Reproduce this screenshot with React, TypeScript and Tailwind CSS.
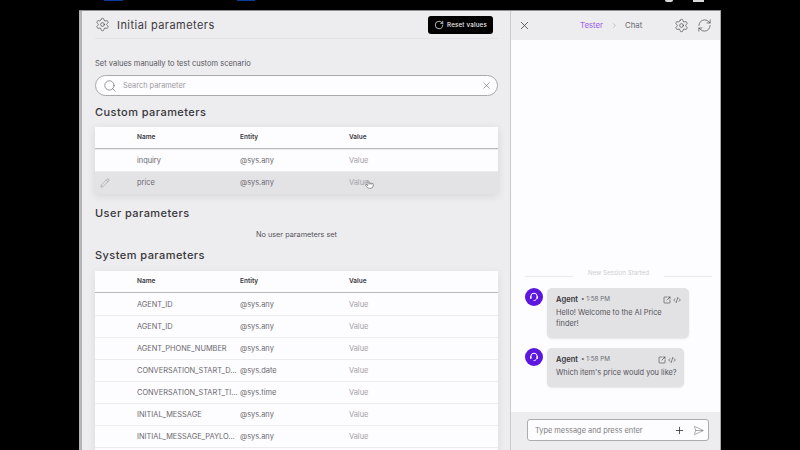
import React from 'react';
import { Settings, RotateCw, RefreshCw, X, Search, Pencil, ChevronRight, Plus, SendHorizontal, SquareArrowOutUpRight, CodeXml, Pointer } from 'lucide-react';

const customRows = [
    { name: 'inquiry', entity: '@sys.any' },
    { name: 'price', entity: '@sys.any', hover: true },
];

const systemRows = [
    { name: 'AGENT_ID', entity: '@sys.any' },
    { name: 'AGENT_ID', entity: '@sys.any' },
    { name: 'AGENT_PHONE_NUMBER', entity: '@sys.any' },
    { name: 'CONVERSATION_START_DATE', entity: '@sys.date' },
    { name: 'CONVERSATION_START_TIME', entity: '@sys.time' },
    { name: 'INITIAL_MESSAGE', entity: '@sys.any' },
    { name: 'INITIAL_MESSAGE_PAYLOAD', entity: '@sys.any' },
    { name: 'LANGUAGE', entity: '@sys.any' },
];

const TableHeader = () => (
    <div className="box-content flex h-[20px] items-center border-b border-[#b9b8bc] pt-[1px] text-[6.5px] font-semibold text-[#3a393d]">
        <span className="w-[42px]" />
        <span className="w-[103px]">Name</span>
        <span className="w-[109px]">Entity</span>
        <span>Value</span>
    </div>
);

const Row = ({ name, entity, hover }: { name: string; entity: string; hover?: boolean }) => (
    <div className={`relative flex h-[22px] items-center border-b text-[7.4px] ${hover ? 'bg-[#e3e2e5] border-[#e3e2e5]' : 'border-[#ecebee]'}`}>
        <span className="flex w-[42px] pl-[5px]">
            {hover && <Pencil size={10} strokeWidth={1} className="text-[#77767b]" />}
        </span>
        <span className="w-[103px] truncate pr-[2px] text-[#6b6a70]">{name}</span>
        <span className="w-[109px] text-[#6b6a70]">{entity}</span>
        <span className="text-[#a3a2a7]">Value</span>
        {hover && (
            <Pointer size={9} strokeWidth={1.3} fill="#ffffff" className="absolute left-[270px] top-[8px] text-[#4b4a4f]" />
        )}
    </div>
);

const AgentAvatar = () => (
    <div className="flex h-[18px] w-[18px] shrink-0 items-center justify-center rounded-full bg-[#5b16e0]">
        <svg width="10" height="10" viewBox="0 0 10 10" fill="none" stroke="#ffffff" strokeWidth="1" strokeLinecap="round">
            <path d="M1.8 5.4V4.4a3.2 3.2 0 0 1 6.4 0v1" />
            <path d="M1.8 4.8v1.4M8.2 4.8v1.4" strokeWidth="1.5" />
            <path d="M7.6 6.8 C7 8.2 6 8.6 5 8.6" />
        </svg>
    </div>
);

const Bubble = ({ text, className }: { text: string; className: string }) => (
    <div className="flex gap-[4px]">
        <AgentAvatar />
        <div className={`rounded-[5px] bg-[#e2e1e4] pl-[9px] pr-[5px] pt-[6px] shadow-[0_1px_2px_rgba(0,0,0,0.1)] ${className}`}>
            <div className="flex h-[11px] items-center">
                <span className="text-[7.6px] font-semibold text-[#38373b]">Agent</span>
                <span className="ml-[3px] text-[6.3px] text-[#6b6a70]">• 1:58 PM</span>
                <span className="ml-auto mr-[3px] flex items-center gap-[2px] text-[#2f2e32]">
                    <SquareArrowOutUpRight size={8} strokeWidth={1.6} />
                    <CodeXml size={8} strokeWidth={1.6} />
                </span>
            </div>
            <p className="mt-[2px] text-[7.4px] leading-[11px] text-[#55545a]">{text}</p>
        </div>
    </div>
);

export default function App() {
    return (
        <div className="flex h-[450px] w-[800px] flex-col overflow-hidden bg-black font-['Inter',sans-serif]">
            <div className="relative flex h-[10px] shrink-0">
                <span className="ml-[104px] h-[1px] w-[19px] bg-[#0a3a9c]" />
                <span className="ml-[114px] h-[1px] w-[18px] bg-[#0a3a9c]" />
                <span className="ml-[410px] h-[2px] w-[8px] rounded-b-full bg-[#d9d9d9]" />
                <span className="ml-[20px] h-[2px] w-[11px] bg-[#d9d9d9]" />
            </div>
            <div className="ml-[79px] flex h-[440px] w-[642px] overflow-hidden border-t border-[#8f8e92]">
                <div className="flex w-[432px] shrink-0 border-r border-[#c9c8cc] bg-[#edecef]">
                    <div className="w-[3px] shrink-0 bg-[#b4b3b7]" />
                    <div className="ml-[13px] w-[403px] shrink-0">
                        <div className="flex h-[28px] items-center border-b border-[#e3e2e5]">
                            <Settings size={15} strokeWidth={1} className="text-[#3a393d]" />
                            <span className="ml-[7px] pt-[1px] text-[11px] tracking-[0.45px] text-[#3a393d]">Initial parameters</span>
                            <button className="ml-auto mr-[5px] flex h-[18px] w-[65px] items-center justify-center gap-[3px] rounded-[3px] bg-black text-[6.2px] font-medium tracking-[0.2px] text-[#efefef]">
                                <RotateCw size={10} strokeWidth={1.8} />
                                Reset values
                            </button>
                        </div>
                        <p className="mt-[19px] text-[7.5px] leading-[12px] text-[#58575c]">Set values manually to test custom scenario</p>
                        <div className="mt-[5px] flex h-[21px] items-center rounded-full border border-[#a9a8ac] bg-[#fdfcfe] pl-[7px] pr-[5px]">
                            <Search size={14} strokeWidth={1} className="text-[#55545a]" />
                            <span className="ml-[6px] pt-[1px] text-[7.4px] text-[#9b9a9f]">Search parameter</span>
                            <X size={11} strokeWidth={1.1} className="ml-auto text-[#55545a]" />
                        </div>
                        <h2 className="mt-[9px] text-[11px] font-medium leading-[14px] tracking-[0.45px] text-[#37363a]">Custom parameters</h2>
                        <div className="mt-[8px] bg-[#fdfcfe] shadow-[0_2px_8px_rgba(0,0,0,0.1)]">
                            <TableHeader />
                            <div className="h-[1px] bg-[#edecef]" />
                            {customRows.map((row) => <Row key={row.name} {...row} />)}
                        </div>
                        <h2 className="mt-[12px] text-[11px] font-medium leading-[14px] tracking-[0.45px] text-[#37363a]">User parameters</h2>
                        <p className="mt-[10px] text-center text-[7.3px] leading-[10px] text-[#55545a]">No user parameters set</p>
                        <h2 className="mt-[8px] text-[11px] font-medium leading-[14px] tracking-[0.45px] text-[#37363a]">System parameters</h2>
                        <div className="mt-[9px] bg-[#fdfcfe] shadow-[0_2px_8px_rgba(0,0,0,0.08)]">
                            <TableHeader />
                            <div className="h-[1px]" />
                            {systemRows.map((row, i) => <Row key={i} {...row} />)}
                        </div>
                    </div>
                </div>
                <div className="flex w-[210px] shrink-0 flex-col border-r border-[#a9a8ac] bg-[#fdfcfe]">
                    <div className="flex h-[29px] shrink-0 items-center bg-[#edecef] pl-[7px] pr-[8px]">
                        <X size={13} strokeWidth={1.3} className="text-[#2f2e32]" />
                        <span className="ml-[49px] text-[7.8px] text-[#9a62ea]">Tester</span>
                        <ChevronRight size={7} strokeWidth={1.2} className="ml-[8px] text-[#6b6a70]" />
                        <span className="ml-[7px] text-[7.8px] text-[#6b6a70]">Chat</span>
                        <Settings size={15} strokeWidth={1} className="ml-auto text-[#3a393d]" />
                        <RefreshCw size={15} strokeWidth={1} className="ml-[8px] text-[#3a393d]" />
                    </div>
                    <div className="flex flex-1 flex-col justify-end pb-[25px] pl-[14px] pr-[8px]">
                        <div className="flex items-end gap-[15px]">
                            <span className="h-[1px] flex-1 bg-[#e9e8eb]" />
                            <span className="text-[6.2px] leading-[9px] text-[#cfced2]">New Session Started</span>
                            <span className="h-[1px] flex-1 bg-[#e9e8eb]" />
                        </div>
                        <div className="mt-[11px] flex flex-col gap-[10px]">
                            <Bubble text="Hello! Welcome to the AI Price finder!" className="h-[50px] w-[142px]" />
                            <Bubble text="Which item's price would you like?" className="h-[39px] w-[137px]" />
                        </div>
                    </div>
                    <div className="flex h-[38px] shrink-0 items-start bg-[#edecef] pl-[16px] pt-[7px]">
                        <div className="flex h-[22px] w-[182px] items-center rounded-[3px] border border-[#acabaf] bg-[#fdfcfe] pl-[7px] pr-[4px]">
                            <span className="pt-[1px] text-[7.4px] text-[#7d7c81]">Type message and press enter</span>
                            <Plus size={11} strokeWidth={1.6} className="ml-auto text-[#1f1e22]" />
                            <SendHorizontal size={11} strokeWidth={1} className="ml-[8px] text-[#55545a]" />
                        </div>
                    </div>
                </div>
            </div>
        </div>
    );
}
